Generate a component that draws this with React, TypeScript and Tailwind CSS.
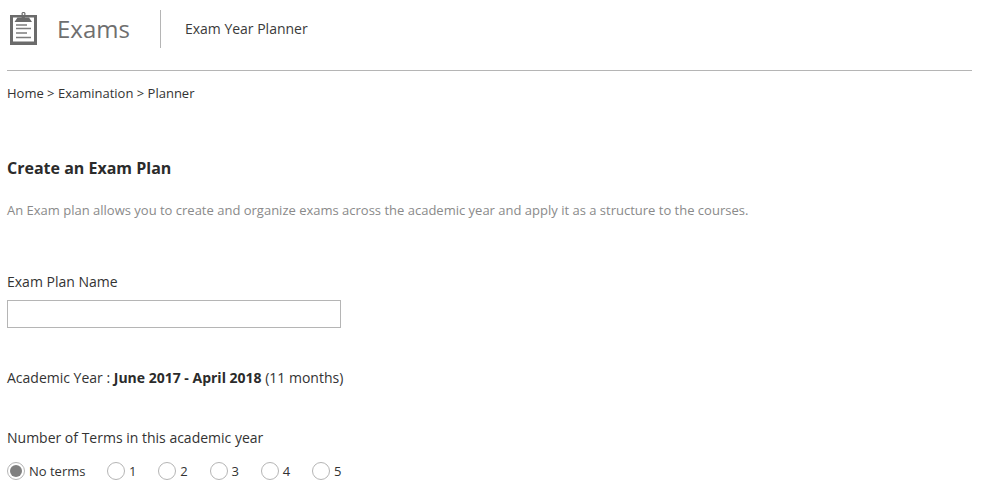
const terms = ["1", "2", "3", "4", "5"];

const ExamIcon = () => (
  <svg width="27" height="33" viewBox="0 0 27 33" fill="none" className="block">
    <path fillRule="evenodd" clipRule="evenodd" d="M0 3h27v30H0zM3 5.500v24h21v-24z" fill="#6b6b6b" />
    <path d="M4.500 10l3-4.500h4l1-2h1.500l1 2h4l3 4.500z" fill="#6b6b6b" />
    <circle cx="13.500" cy="2" r="1.500" stroke="#6b6b6b" strokeWidth="1.200" />
    <path d="M6 13h11M6 16.500h15M6 21h11M6 25.500h15" stroke="#7d7d7d" strokeWidth="1.300" />
  </svg>
);

const Radio = ({ checked = false }: { checked?: boolean }) => (
  <span className="w-[18px] h-[18px] rounded-full border border-[#b5b5b5] bg-white flex items-center justify-center shrink-0">
    {checked && <span className="w-3 h-3 rounded-full bg-[#808080]" />}
  </span>
);

const App = () => {
  return (
    <div className="h-[498px] overflow-hidden bg-white font-['Open_Sans',sans-serif] text-[13px] text-[#333] pl-[7px] w-[972px]">
      {/* Header */}
      <header className="h-[71px] border-b border-[#b5b5b5] flex items-start">
        <div className="w-[30px] ml-[3px] mt-[12px]">
          <ExamIcon />
        </div>
        <span className="ml-[17px] mt-[11px] text-[24px] leading-[36px] text-[#6f6f6f]">Exams</span>
        <div className="ml-[30px] mt-[10px] w-px h-[38px] bg-[#b5b5b5]" />
        <span className="ml-[24px] mt-[19px] text-[14px] leading-[20px] text-[#3a3a3a]">Exam Year Planner</span>
      </header>

      <div className="mt-[13px] leading-[18px] text-[#333]">Home &gt; Examination &gt; Planner</div>

      <h1 className="mt-[55px] text-[16px] leading-[22px] font-bold text-[#2b2b2b]">Create an Exam Plan</h1>
      <p className="mt-[22px] text-[13px] leading-[18px] text-[#8a8a8a]">
        An Exam plan allows you to create and organize exams across the academic year and apply it as a structure to the courses.
      </p>

      <label className="block mt-[53px] text-[14px] leading-[20px]">Exam Plan Name</label>
      <input type="text" className="block mt-[8px] w-[334px] h-[28px] border border-[#b5b5b5] bg-white" />

      <p className="mt-[40px] text-[14px] leading-[20px]">
        Academic Year : <strong className="font-bold text-[#2b2b2b]">June 2017 - April 2018</strong> (11 months)
      </p>

      <p className="mt-[40px] text-[14px] leading-[20px]">Number of Terms in this academic year</p>

      <div className="mt-[14px] flex items-center">
        <div className="flex items-center gap-[4px] w-[100px]">
          <Radio checked />
          <span className="leading-[18px]">No terms</span>
        </div>
        {terms.map((term) => (
          <div key={term} className="flex items-center gap-[4px] w-[51.250px]">
            <Radio />
            <span className="leading-[18px]">{term}</span>
          </div>
        ))}
      </div>
    </div>
  );
};

export default App;
